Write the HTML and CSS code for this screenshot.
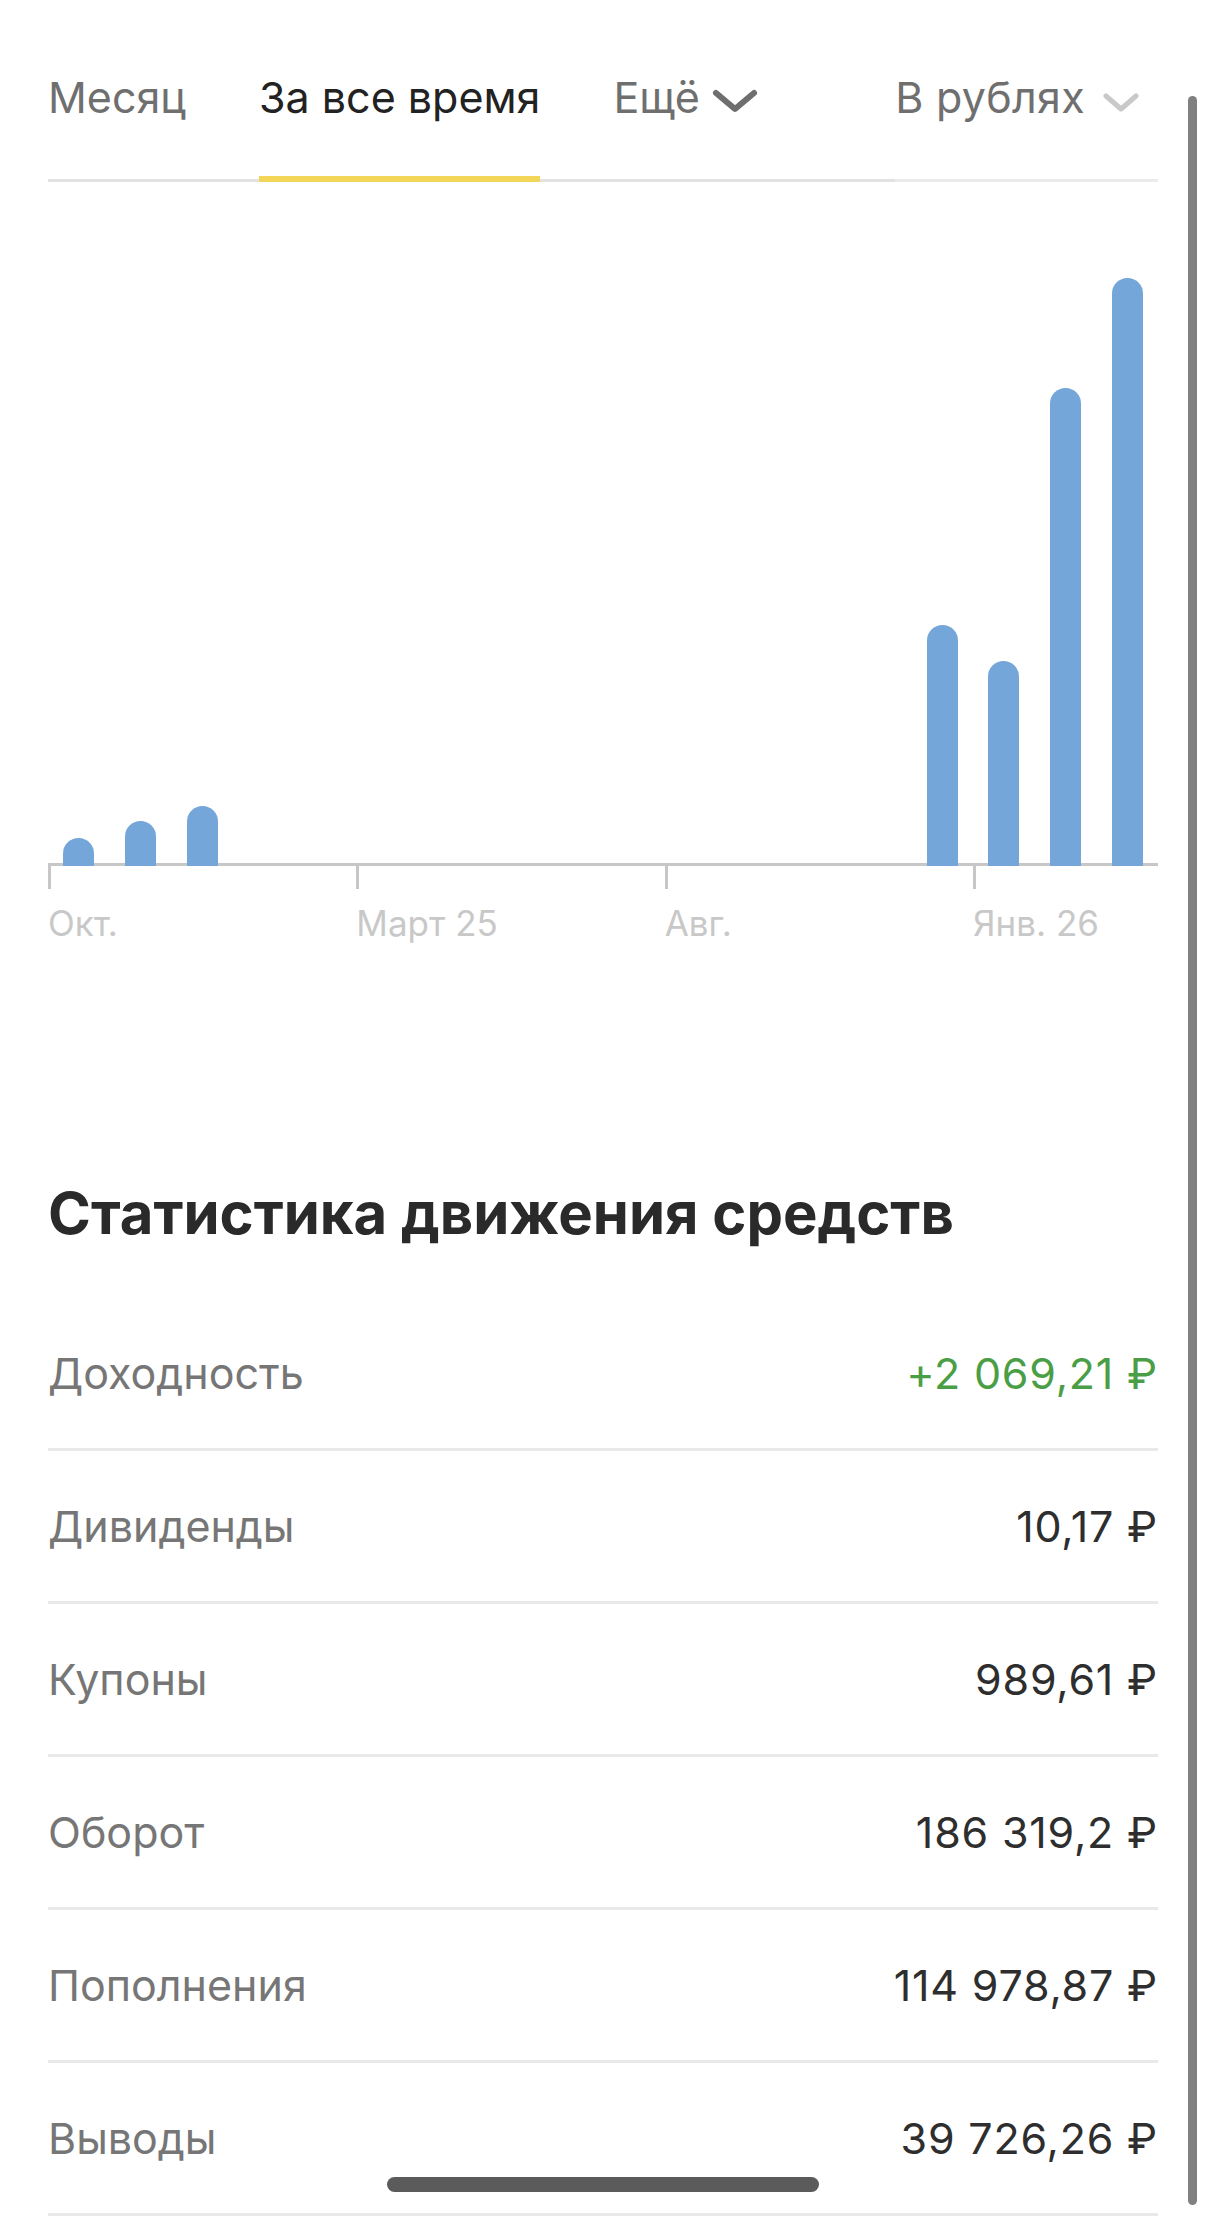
FILE: index.html
```html
<!DOCTYPE html>
<html lang="ru">
<head>
  <meta charset="UTF-8" />
  <meta name="viewport" content="width=device-width, initial-scale=1.0"/>
  <title>Статистика движения средств</title>
  <link rel="stylesheet" href="styles.css">
</head>
<body>
  <div class="page">
    <div class="tabs-bar">
      <div class="tabs">
        <div class="tab">Месяц</div>
        <div class="tab active">За все время</div>
        <div class="tab more">Ещё<svg class="chev-dark" width="46" height="24" viewBox="0 0 46 24">
            <path d="M4 4 L23 20 L42 4" fill="none" stroke="#6e6e6e" stroke-width="6" stroke-linecap="round" stroke-linejoin="round"/>
          </svg></div>
      </div>
      <div class="currency">В рублях<svg class="chev-light" width="36" height="20" viewBox="0 0 36 20">
          <path d="M3 3 L18 16 L33 3" fill="none" stroke="#c9c9c9" stroke-width="5" stroke-linecap="round" stroke-linejoin="round"/>
        </svg></div>
    </div>

    <div class="chart">
      <div class="bars">
        <div class="bar" style="height:28px"></div>
        <div class="bar" style="height:45px"></div>
        <div class="bar" style="height:60px"></div>
        <div class="bar" style="height:0"></div>
        <div class="bar" style="height:0"></div>
        <div class="bar" style="height:0"></div>
        <div class="bar" style="height:0"></div>
        <div class="bar" style="height:0"></div>
        <div class="bar" style="height:0"></div>
        <div class="bar" style="height:0"></div>
        <div class="bar" style="height:0"></div>
        <div class="bar" style="height:0"></div>
        <div class="bar" style="height:0"></div>
        <div class="bar" style="height:0"></div>
        <div class="bar" style="height:241px"></div>
        <div class="bar" style="height:205px"></div>
        <div class="bar" style="height:478px"></div>
        <div class="bar" style="height:588px"></div>
      </div>
      <div class="axis-labels">
        <div class="axis-label"><span class="tick"></span>Окт.</div>
        <div class="axis-label"><span class="tick"></span>Март 25</div>
        <div class="axis-label"><span class="tick"></span>Авг.</div>
        <div class="axis-label"><span class="tick"></span>Янв. 26</div>
      </div>
    </div>

    <h2 class="section-title">Статистика движения средств</h2>

    <div class="stats">
      <div class="stat-row">
        <span class="stat-name">Доходность</span>
        <span class="stat-value positive">+2 069,21 ₽</span>
      </div>
      <div class="stat-row">
        <span class="stat-name">Дивиденды</span>
        <span class="stat-value">10,17 ₽</span>
      </div>
      <div class="stat-row">
        <span class="stat-name">Купоны</span>
        <span class="stat-value">989,61 ₽</span>
      </div>
      <div class="stat-row">
        <span class="stat-name">Оборот</span>
        <span class="stat-value">186 319,2 ₽</span>
      </div>
      <div class="stat-row">
        <span class="stat-name">Пополнения</span>
        <span class="stat-value">114 978,87 ₽</span>
      </div>
      <div class="stat-row">
        <span class="stat-name">Выводы</span>
        <span class="stat-value">39 726,26 ₽</span>
      </div>
    </div>

    <div class="scroll-indicator"></div>
    <div class="home-indicator"></div>
  </div>
</body>
</html>
```

FILE: styles.css
```css
* {
  box-sizing: border-box;
}

body {
  margin: 0;
  background: #fff;
  font-family: 'Inter', 'Liberation Sans', 'DejaVu Sans', sans-serif;
}

.page {
  position: relative;
  width: 1206px;
  min-height: 2216px;
  padding: 0 48px;
  overflow: hidden;
}

/* tabs */

.tabs-bar {
  display: flex;
}

.tabs {
  flex: 1;
  display: flex;
  gap: 73px;
  padding-top: 71px;
  border-bottom: 3px solid #e2e2e2;
}

.tab {
  position: relative;
  padding-bottom: 56px;
  font-size: 43px;
  line-height: 52px;
  color: #6f6f6f;
  white-space: nowrap;
}

.tab.active {
  color: #222;
}

.tab.active::after {
  content: '';
  position: absolute;
  left: 0;
  right: 0;
  bottom: -3px;
  height: 6px;
  background: #f3d657;
}

.chev-dark {
  margin-left: 12px;
  vertical-align: 0;
}

.currency {
  padding: 71px 19px 56px 0;
  border-bottom: 3px solid #ebebeb;
  font-size: 43px;
  line-height: 52px;
  color: #6f6f6f;
  white-space: nowrap;
  letter-spacing: 0.3px;
}

.chev-light {
  margin-left: 18px;
  vertical-align: 0;
}

/* chart */

.bars {
  display: grid;
  grid-template-columns: repeat(18, 1fr);
  align-items: end;
  justify-items: center;
  height: 684px;
  border-bottom: 3px solid #c7c7c7;
}

.bar {
  width: 31px;
  margin-bottom: -3px;
  background: #74a6da;
  border-radius: 16px 16px 0 0;
}

.axis-labels {
  display: grid;
  grid-template-columns: 5fr 5fr 5fr 3fr;
}

.axis-label {
  font-size: 35px;
  line-height: 42px;
  color: #c8c8c8;
  white-space: nowrap;
}

.tick {
  display: block;
  width: 3px;
  height: 23px;
  margin-bottom: 13px;
  background: #c7c7c7;
}

/* stats */

.section-title {
  margin: 236px 0 52px;
  font-size: 58px;
  line-height: 66px;
  font-weight: 700;
  color: #2a2a2a;
}

.stat-row {
  display: flex;
  justify-content: space-between;
  align-items: center;
  padding: 49px 0;
  border-bottom: 3px solid #e9e9e9;
  font-size: 43px;
  line-height: 52px;
}

.stat-name {
  color: #767676;
}

.stat-value {
  color: #2e2e2e;
  letter-spacing: 0.8px;
}

.stat-value.positive {
  color: #4a9e46;
}

/* system overlays */

.scroll-indicator {
  position: absolute;
  top: 96px;
  bottom: 11px;
  right: 9px;
  width: 9px;
  border-radius: 5px;
  background: #808080;
}

.home-indicator {
  position: absolute;
  left: 387px;
  bottom: 24px;
  width: 432px;
  height: 15px;
  border-radius: 8px;
  background: #5b5b5b;
}
```
